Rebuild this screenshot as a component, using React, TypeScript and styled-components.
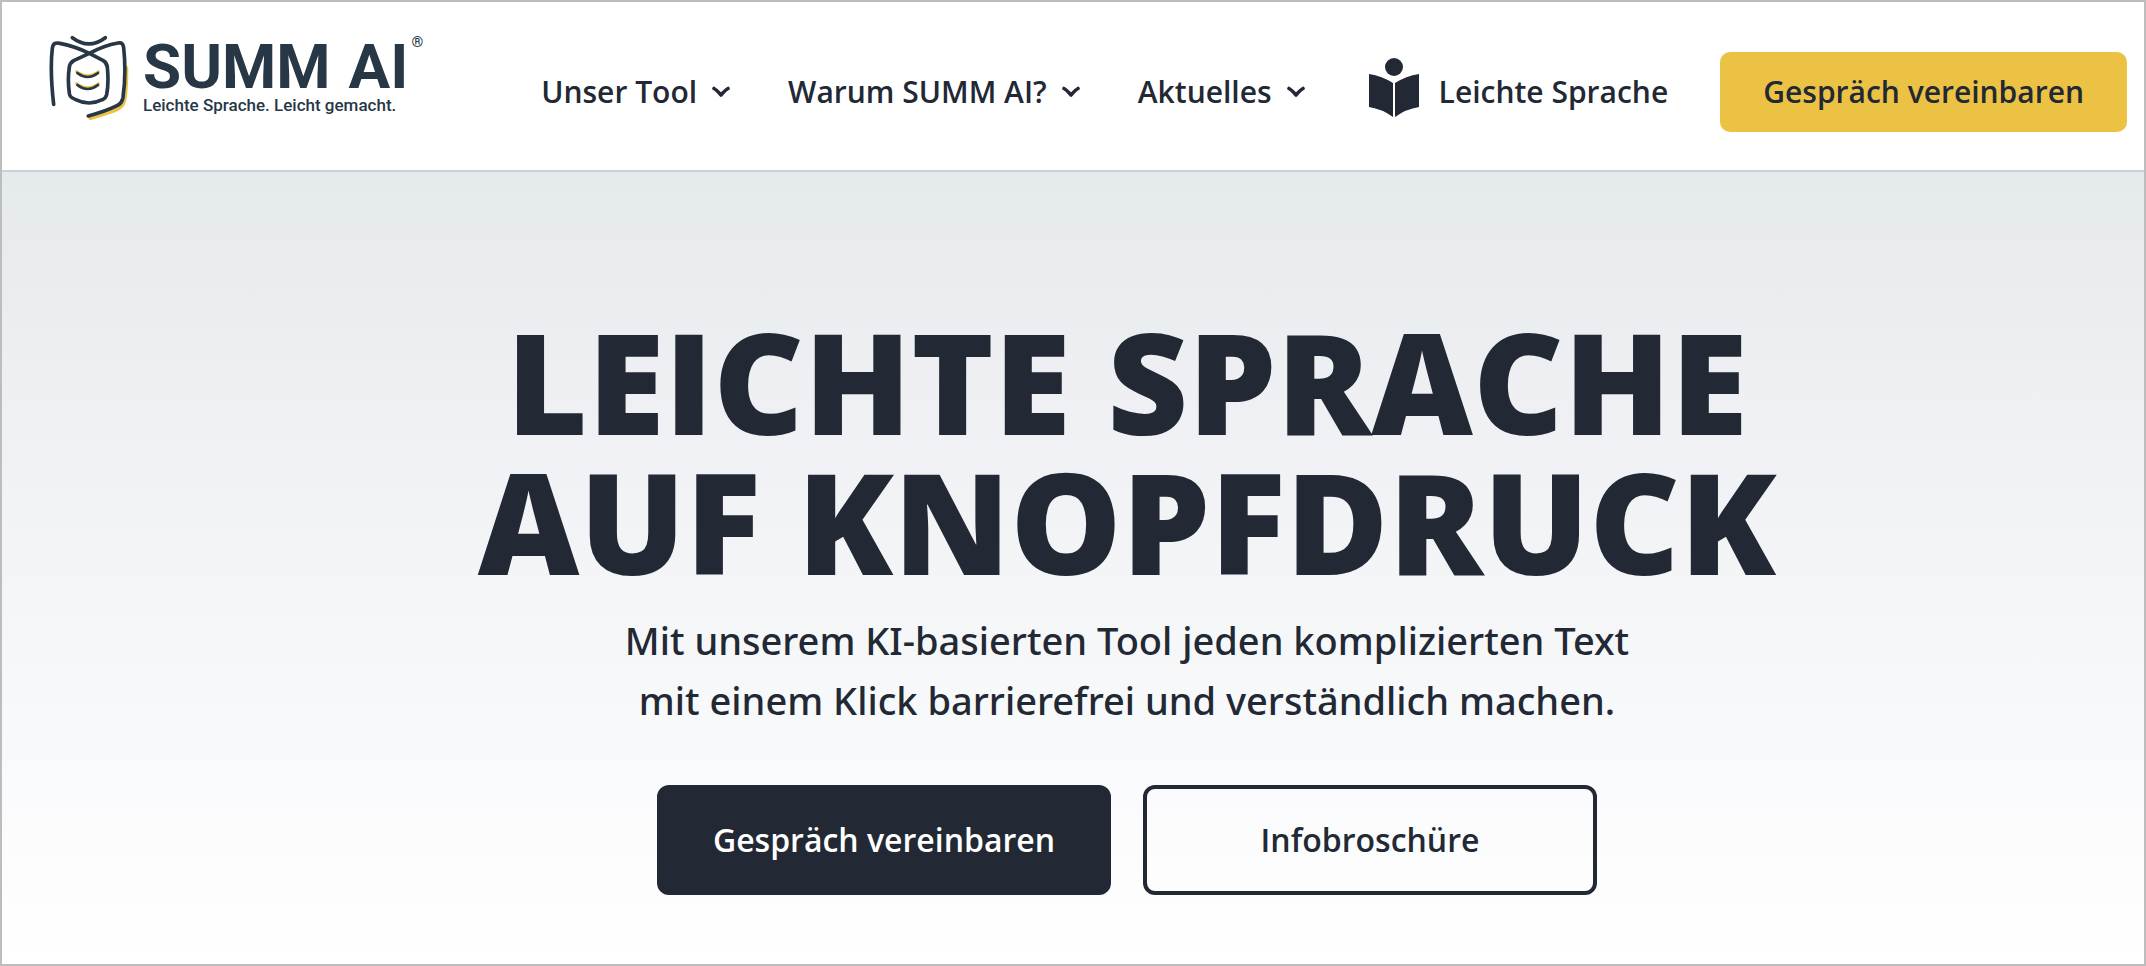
import React from "react";
import styled, { createGlobalStyle, css } from "styled-components";

const ink = "#222934";
const logoInk = "#283746";
const yellow = "#ecc245";

const GlobalStyle = createGlobalStyle`
  *, *::before, *::after { box-sizing: border-box; }
  body {
    margin: 0;
    background: #fff;
    color: ${ink};
    font-family: "Open Sans", "Noto Sans", sans-serif;
  }
`;

const Page = styled.div`
  min-height: 100vh;
  display: flex;
  flex-direction: column;
  border: 2px solid #bdbdbd;
`;

const Header = styled.header`
  display: flex;
  align-items: center;
  padding: 32px 17px 36px 46px;
  border-bottom: 2px solid #cbd0d3;
  background: #fff;
`;

const LogoLink = styled.a`
  display: flex;
  align-items: flex-start;
  height: 100px;
  gap: 13px;
  color: ${logoInk};
  text-decoration: none;
  font-family: Roboto, sans-serif;
`;

const LogoText = styled.span`
  display: grid;
  grid-template-columns: auto auto;
  column-gap: 3px;
  align-items: start;
`;

const LogoName = styled.span`
  display: flex;
  gap: 18px;
  padding-top: 5px;
  font-size: 62px;
  line-height: 56px;
  font-weight: 700;
  white-space: nowrap;
`;

const LogoMark = styled.span`
  font-size: 15px;
  line-height: 16px;
  font-weight: 500;
`;

const LogoClaim = styled.span`
  font-size: 17px;
  line-height: 20px;
  font-weight: 500;
  white-space: nowrap;
`;

const Nav = styled.nav`
  display: flex;
  align-items: center;
  margin: 16px 0 0 auto;
`;

const NavList = styled.ul`
  display: flex;
  align-items: center;
  gap: 58px;
  margin: 0;
  padding: 0;
  list-style: none;
`;

const navText = css`
  font-family: inherit;
  font-size: 30px;
  line-height: 40px;
  font-weight: 600;
  color: ${ink};
  white-space: nowrap;
`;

const NavButton = styled.button`
  ${navText}
  display: flex;
  align-items: center;
  gap: 15px;
  padding: 0;
  border: 0;
  background: none;
  cursor: pointer;
`;

const NavLink = styled.a`
  ${navText}
  display: flex;
  align-items: center;
  gap: 20px;
  margin-left: 64px;
  text-decoration: none;
`;

const Button = styled.button<{ $kind: "accent" | "solid" | "outline" }>`
  font-family: inherit;
  font-weight: 600;
  white-space: nowrap;
  cursor: pointer;
  ${({ $kind }) =>
    $kind === "accent"
      ? css`
          margin-left: 52px;
          padding: 20px 43px;
          border: 0;
          border-radius: 10px;
          font-size: 30px;
          line-height: 40px;
          background: ${yellow};
          color: ${ink};
        `
      : css`
          width: 454px;
          padding: 31px 20px;
          border: 4px solid ${ink};
          border-radius: 12px;
          font-size: 32px;
          line-height: 40px;
          background: ${$kind === "solid" ? ink : "transparent"};
          color: ${$kind === "solid" ? "#fff" : ink};
        `}
`;

const Hero = styled.main`
  flex: 1;
  display: flex;
  flex-direction: column;
  align-items: center;
  padding: 139px 0 69px 108px;
  text-align: center;
  background: linear-gradient(#e5eaed, #edeff2 25%, #f7f8fa 65%, #fff);
`;

const Title = styled.h1`
  margin: 0;
  font-size: 140px;
  line-height: 140px;
  font-weight: 800;
  text-transform: uppercase;
`;

const Lead = styled.p`
  margin: 19px 0 0;
  font-family: "Noto Sans", sans-serif;
  font-size: 38px;
  line-height: 60px;
  font-weight: 500;
`;

const Actions = styled.div`
  display: flex;
  gap: 32px;
  margin-top: 55px;
`;

const BeeBook = () => (
  <svg width="82" height="86" viewBox="144 102 246 258" fill="none" strokeLinecap="round" strokeLinejoin="round" aria-hidden="true">
    <g stroke={yellow} strokeWidth="12">
      <path d="M379 204C379 240 378 276 373 300C371 312 364 322 350 328C326 338 298 346 271 354" />
      <path d="M230 215Q263 240 295 215M230 251Q263 276 295 251" strokeWidth="9" />
    </g>
    <g stroke={logoInk} strokeWidth="11">
      <path d="M161 313C154 252 151 196 157 145C159 130 165 127 180 130C210 136 240 146 268 160L310 182C318 187 321 192 322 202C325 232 325 258 320 284C318 292 315 296 307 299C281 312 253 312 227 299C214 293 209 290 208 280C204 250 204 226 208 202C209 192 213 187 221 182L268 160C294 146 325 134 354 129C366 127 369 131 371 143C376 190 376 242 369 292C367 304 363 311 351 317C325 330 294 340 265 348" />
      <path d="M217 113Q267 150 316 113" />
      <path d="M232 219Q263 243 294 219M232 255Q263 279 294 255" strokeWidth="8" />
    </g>
  </svg>
);

const Chevron = () => (
  <svg width="18" height="12" viewBox="0 0 18 12" fill="none" stroke={ink} strokeWidth="3.6" strokeLinecap="round" strokeLinejoin="round" aria-hidden="true">
    <path d="M2 2.5C5 4 7 7 9 9C11 7 13 4 16 2.5" />
  </svg>
);

const Reader = () => (
  <svg width="50" height="68" viewBox="0 0 50 68" fill={ink} aria-hidden="true">
    <circle cx="25" cy="9" r="9" />
    <path d="M0 16Q13 18 24 25V59Q13 51 0 49ZM50 16Q37 18 26 25V59Q37 51 50 49Z" />
  </svg>
);

const menus = ["Unser Tool", "Warum SUMM AI?", "Aktuelles"];

export default function App() {
  return (
    <Page>
      <GlobalStyle />
      <Header>
        <LogoLink href="#">
          <BeeBook />
          <LogoText>
            <LogoName>
              <span>SUMM</span> <span>AI</span>
            </LogoName>
            <LogoMark>®</LogoMark>
            <LogoClaim>Leichte Sprache. Leicht gemacht.</LogoClaim>
          </LogoText>
        </LogoLink>
        <Nav>
          <NavList>
            {menus.map((label) => (
              <li key={label}>
                <NavButton type="button">
                  {label}
                  <Chevron />
                </NavButton>
              </li>
            ))}
          </NavList>
          <NavLink href="#">
            <Reader />
            Leichte Sprache
          </NavLink>
          <Button type="button" $kind="accent">Gespräch vereinbaren</Button>
        </Nav>
      </Header>
      <Hero>
        <Title>
          Leichte Sprache
          <br />
          auf Knopfdruck
        </Title>
        <Lead>
          Mit unserem KI-basierten Tool jeden komplizierten Text
          <br />
          mit einem Klick barrierefrei und verständlich machen.
        </Lead>
        <Actions>
          <Button type="button" $kind="solid">Gespräch vereinbaren</Button>
          <Button type="button" $kind="outline">Infobroschüre</Button>
        </Actions>
      </Hero>
    </Page>
  );
}
